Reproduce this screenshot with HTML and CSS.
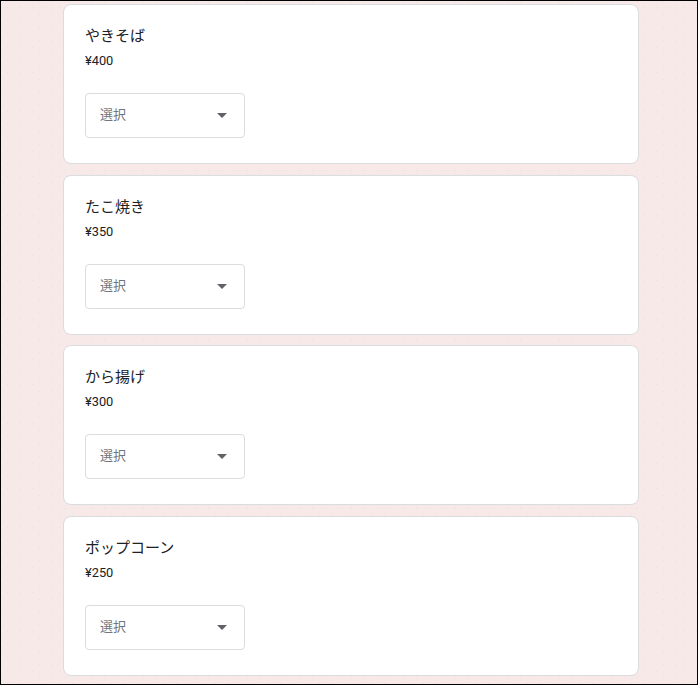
FILE: index.html
```html
<!DOCTYPE html>
<html lang="ja">

<head>
  <meta charset="utf-8">
  <title>注文フォーム</title>
  <link rel="stylesheet" href="styles.css">
</head>

<body>
  <div class="frame">
    <div class="list">

      <div class="card">
        <div class="item-name">やきそば</div>
        <div class="item-price">¥400</div>
        <div class="select">
          <span class="select-label">選択</span>
          <span class="select-arrow"></span>
        </div>
      </div>

      <div class="card">
        <div class="item-name">たこ焼き</div>
        <div class="item-price">¥350</div>
        <div class="select">
          <span class="select-label">選択</span>
          <span class="select-arrow"></span>
        </div>
      </div>

      <div class="card">
        <div class="item-name">から揚げ</div>
        <div class="item-price">¥300</div>
        <div class="select">
          <span class="select-label">選択</span>
          <span class="select-arrow"></span>
        </div>
      </div>

      <div class="card">
        <div class="item-name">ポップコーン</div>
        <div class="item-price">¥250</div>
        <div class="select">
          <span class="select-label">選択</span>
          <span class="select-arrow"></span>
        </div>
      </div>

    </div>
  </div>
</body>

</html>
```

FILE: styles.css
```css
html,
body {
  margin: 0;
  height: 100%;
}

body {
  font-family: Roboto, "Noto Sans CJK JP", sans-serif;
  color: #202124;
}

.frame {
  box-sizing: border-box;
  height: 685px;
  width: 698px;
  border: 1px solid #000;
  overflow: hidden;
  background-color: #f7e9e7;
  background-image:
    radial-gradient(circle, #eedcda 0.6px, transparent 1px),
    radial-gradient(circle, #eedcda 0.6px, transparent 1px);
  background-size: 13px 13px, 13px 13px;
  background-position: 0 0, 6px 7px;
}

.list {
  width: 576px;
  margin: 3px 0 0 62px;
  display: flex;
  flex-direction: column;
  gap: 10.67px;
}

.card {
  box-sizing: border-box;
  height: 160px;
  background: #fff;
  border: 1px solid #dadce0;
  border-radius: 8px;
  padding: 20px 21px 25px;
}

.item-name {
  font-size: 15px;
  line-height: 22px;
  color: #202124;
}

.item-price {
  margin-top: 4px;
  font-size: 12.8px;
  line-height: 20px;
  color: #202124;
}

.select {
  box-sizing: border-box;
  margin-top: 22px;
  width: 160px;
  height: 45px;
  border: 1px solid #dadce0;
  border-radius: 4px;
  padding: 0 17px 0 14px;
  display: flex;
  align-items: center;
  justify-content: space-between;
}

.select-label {
  font-size: 13px;
  line-height: 16px;
  margin-bottom: 1px;
  color: #70757a;
}

.select-arrow {
  width: 0;
  height: 0;
  border-left: 5px solid transparent;
  border-right: 5px solid transparent;
  border-top: 5px solid #5f6368;
}
```
